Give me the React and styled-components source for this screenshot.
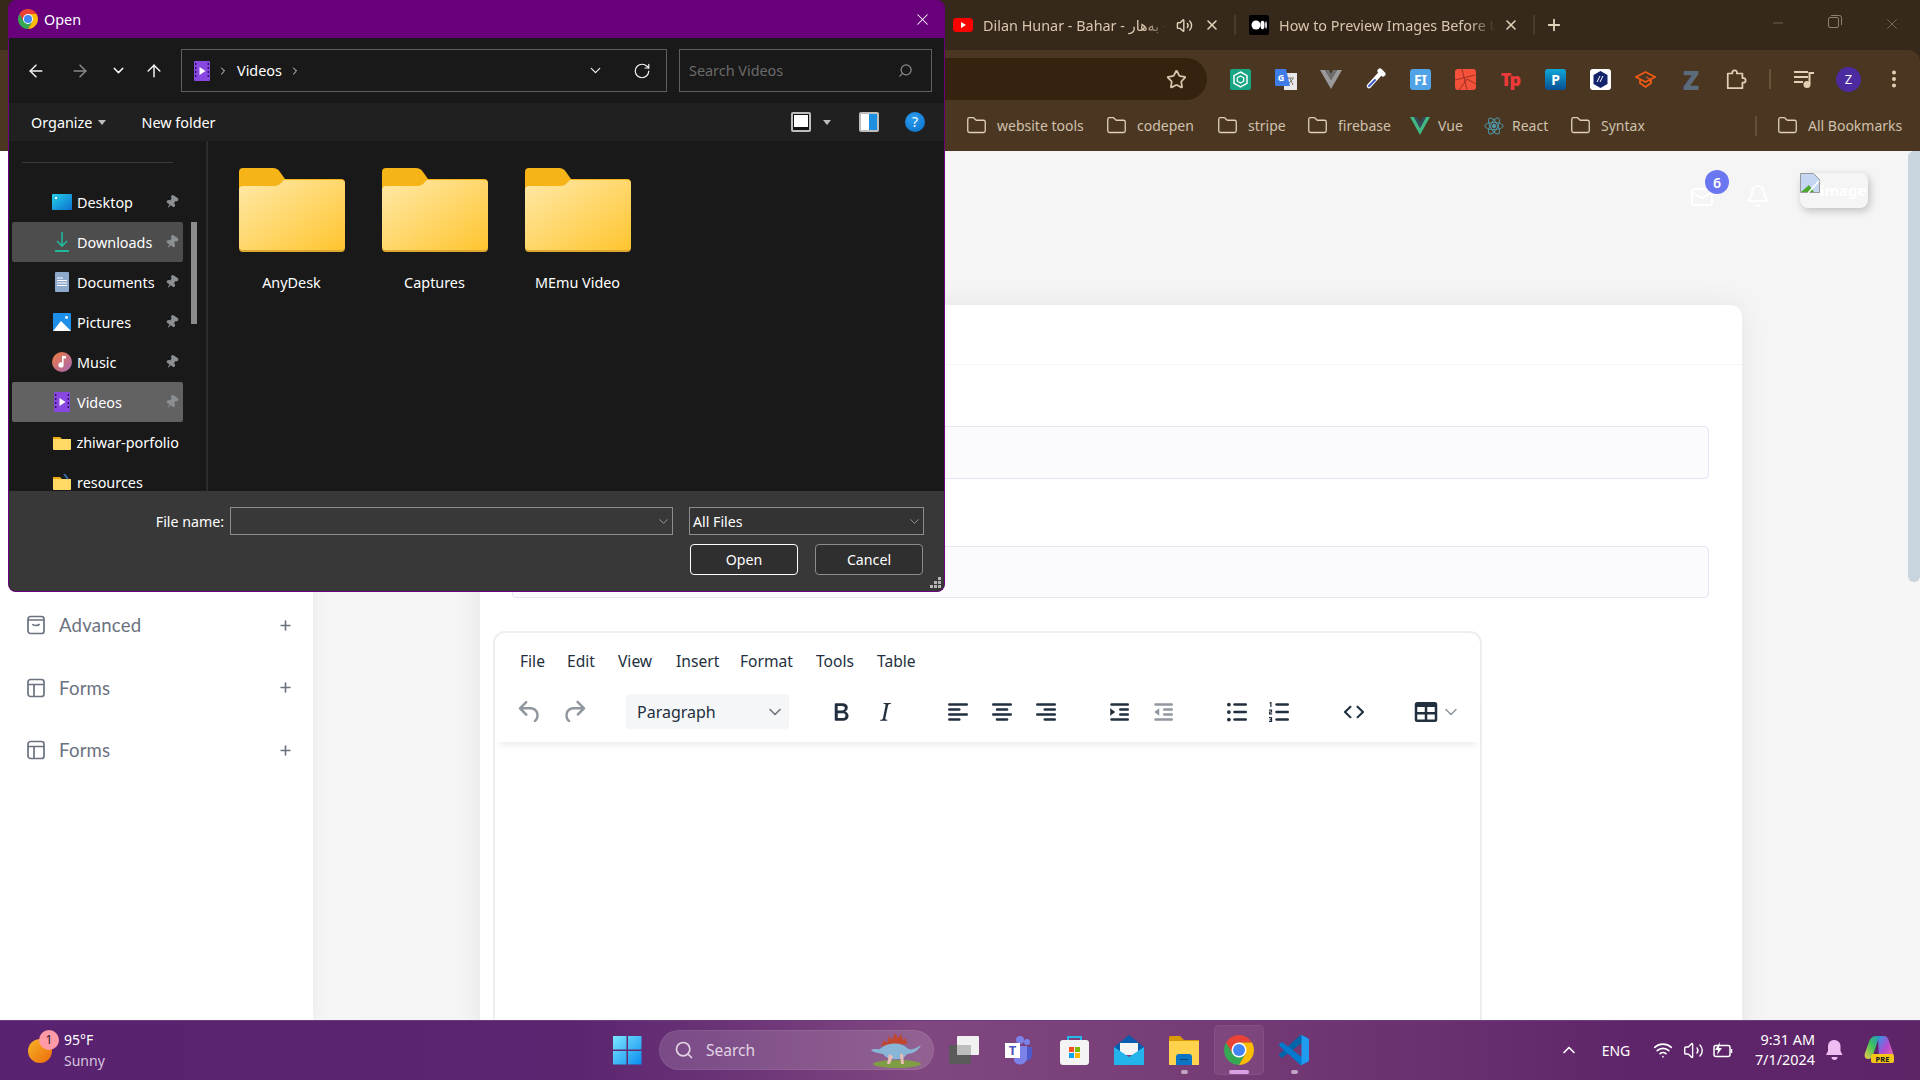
import styled, { createGlobalStyle } from 'styled-components';
import {
  ArrowLeft,
  ArrowRight,
  ArrowUp,
  Bell,
  ChevronDown,
  ChevronRight,
  ChevronUp,
  EllipsisVertical,
  Folder,
  Mail,
  Minus,
  Pin,
  Plus,
  RotateCw,
  Search,
  Star,
  Volume2,
  Wifi,
  X,
} from 'lucide-react';

const ui = `"Noto Sans", "Open Sans", "DejaVu Sans", sans-serif`;

const GlobalStyle = createGlobalStyle`
  html, body { margin: 0; padding: 0; width: 1920px; height: 1080px; overflow: hidden; }
  * { box-sizing: border-box; }
  body { font-family: ${ui}; background: #f5f5f5; }
  svg { display: block; flex: none; }
`;

const Screen = styled.div`
  position: relative;
  width: 1920px;
  height: 1080px;
  display: grid;
  grid-template-rows: 151px 869px 60px;
  overflow: hidden;
`;

/* ---------- browser chrome ---------- */

const BrowserFrame = styled.header`
  background: #36281b;
  display: flex;
  flex-direction: column;
`;

const TabStrip = styled.div`
  height: 50px;
  display: flex;
  align-items: center;
  padding-left: 953px;
`;

const Tab = styled.div`
  width: ${(p) => p.$width}px;
  padding-right: 7px;
  display: flex;
  align-items: center;
  color: #d9c6ad;
  font-size: 14.4px;
`;

const TabTitle = styled.div`
  flex: 1;
  min-width: 0;
  margin-left: 10px;
  white-space: nowrap;
  overflow: hidden;
  -webkit-mask-image: linear-gradient(90deg, #000 88%, transparent);
  mask-image: linear-gradient(90deg, #000 88%, transparent);
`;

const TabAction = styled.span`
  width: 30px;
  padding-left: ${(p) => p.$shift || 0}px;
  display: flex;
  justify-content: center;
  color: #e3d3bb;
`;

const TabDivider = styled.span`
  width: 2px;
  height: 20px;
  margin-right: ${(p) => p.$right}px;
  background: #4c3b2b;
`;

const WindowControls = styled.div`
  margin-left: auto;
  display: flex;
  margin-top: -2px;
`;

const WindowButton = styled.span`
  width: 57px;
  display: flex;
  justify-content: center;
  color: #8d8070;
`;

const ToolbarRow = styled.div`
  height: 58px;
  background: #4b3622;
  border-top-right-radius: 12px;
  display: flex;
  padding: 8px 0 0 945px;
`;

const Omnibox = styled.div`
  width: 262px;
  height: 42px;
  background: #36230f;
  border-radius: 0 21px 21px 0;
  display: flex;
  align-items: center;
  justify-content: flex-end;
  padding-right: 20px;
  color: #d9c6ad;
  margin-right: 11px;
`;

const ExtSlot = styled.span`
  width: 45px;
  height: 42px;
  display: flex;
  align-items: center;
  justify-content: center;
  color: #e3d0b4;
`;

const ToolSeparator = styled.span`
  width: 2px;
  height: 20px;
  margin: 11px 10px 0 11px;
  background: #6a533a;
`;

const ExtBox = styled.span`
  width: 21px;
  height: 21px;
  border-radius: 3px;
  display: flex;
  align-items: center;
  justify-content: center;
  background: ${(p) => p.$bg};
  color: #fff;
  font-size: 14px;
  font-weight: 700;
`;

const LetterMark = styled.span`
  color: ${(p) => p.$color};
  font-size: ${(p) => p.$size}px;
  font-weight: 900;
  line-height: 1;
  letter-spacing: -1px;
`;

const Avatar = styled.span`
  width: 25px;
  height: 25px;
  border-radius: 50%;
  background: #4c2aa0;
  color: #fff;
  font-size: 13px;
  display: flex;
  align-items: center;
  justify-content: center;
`;

const BookmarkBar = styled.nav`
  height: 43px;
  padding: 0 0 8px 966px;
  background: #4b3622;
  display: flex;
  align-items: center;
  color: #cfc1ac;
  font-size: 14px;
`;

const Bookmark = styled.span`
  width: ${(p) => p.$width}px;
  display: flex;
  align-items: center;
  gap: ${(p) => p.$gap || 10}px;
  white-space: nowrap;
  svg { color: #e0d0ba; }
`;

const BookmarkSeparator = styled.span`
  width: 2px;
  height: 20px;
  margin: 0 20px 0 auto;
  background: #64503a;
`;

/* ---------- web page under the dialog ---------- */

const PageBody = styled.div`
  display: flex;
  background: #f5f5f5;
  overflow: hidden;
`;

const Sidebar = styled.aside`
  width: 313px;
  flex: none;
  background: #fff;
  padding-top: 443px;
  box-shadow: 0 0 14px rgba(0, 0, 0, 0.06);
  z-index: 1;
`;

const SideRow = styled.div`
  height: 62.5px;
  display: flex;
  align-items: center;
  padding: 0 20px 0 27px;
  color: #6b7280;
  font-family: Lato, ${ui};
  font-size: 18.6px;
  letter-spacing: 0.2px;
  gap: 14px;
  svg:last-child { margin-left: auto; }
`;

const Main = styled.main`
  flex: 1;
  min-width: 0;
`;

const PageTop = styled.div`
  height: 154px;
  display: flex;
  justify-content: flex-end;
  padding: 21px 40px 0 0;
`;

const MailButton = styled.span`
  position: relative;
  width: 24px;
  height: 24px;
  margin-top: 13px;
  color: #fff;
`;

const CountBadge = styled.span`
  position: absolute;
  top: -15px;
  left: 15px;
  width: 24px;
  height: 24px;
  border-radius: 50%;
  background: #6a77f0;
  color: #fff;
  font-size: 14px;
  font-weight: 600;
  display: flex;
  align-items: center;
  justify-content: center;
`;

const BellButton = styled.span`
  margin: 12px 30px 0 32px;
  color: #fff;
`;

const BrokenAvatar = styled.span`
  width: 68px;
  height: 35px;
  margin-top: 1px;
  border-radius: 8px;
  background: #f5f5f5;
  box-shadow: 2px 3px 8px rgba(0, 0, 0, 0.22);
  display: flex;
  color: #fff;
  font-size: 15px;
  font-weight: 700;
  line-height: 34px;
`;

const Card = styled.section`
  width: 1262px;
  height: 760px;
  margin-left: 167px;
  background: #fff;
  border-radius: 12px 12px 0 0;
  box-shadow: 0 0 28px rgba(0, 0, 0, 0.07);
`;

const CardHeader = styled.div`
  height: 60px;
  border-bottom: 1px solid #f6f6f6;
`;

const FieldBox = styled.div`
  width: 1197px;
  height: ${(p) => p.$height}px;
  margin: ${(p) => p.$top}px 0 0 32px;
  background: #fbfbfe;
  border: 1px solid #e4e6f8;
  border-radius: 4px;
`;

const Editor = styled.div`
  width: 989px;
  height: 420px;
  margin: 33px 0 0 13px;
  border: 2px solid #eeeeee;
  border-radius: 12px 12px 0 0;
  color: #222f3e;
`;

const MenuBar = styled.div`
  height: 56px;
  display: flex;
  align-items: center;
  padding-left: 25px;
  font-size: 15.6px;
`;

const MenuItem = styled.span`
  width: ${(p) => p.$width}px;
`;

const EditorTools = styled.div`
  height: 53px;
  padding: 0 0 8px 13px;
  display: flex;
  align-items: center;
  box-shadow: 0 7px 8px -5px rgba(34, 47, 62, 0.12);
`;

const ToolGroup = styled.div`
  display: flex;
  margin-left: ${(p) => p.$left || 0}px;
`;

const ToolSlot = styled.span`
  width: ${(p) => p.$width || 44}px;
  height: 36px;
  display: flex;
  align-items: center;
  justify-content: center;
  color: ${(p) => (p.$off ? '#91979f' : '#222f3e')};
`;

const BlockSelect = styled.div`
  width: 163px;
  height: 35px;
  margin-left: 30px;
  padding: 0 4px 0 11px;
  border-radius: 4px;
  background: #f5f6f7;
  display: flex;
  align-items: center;
  justify-content: space-between;
  font-size: 16px;
  svg { color: #6d7680; }
`;

const PageScrollThumb = styled.div`
  width: 12px;
  height: 431px;
  flex: none;
  background: #c8d5df;
  border-radius: 6px 0 6px 6px;
`;

/* ---------- file dialog ---------- */

const Dialog = styled.div`
  position: absolute;
  top: 0;
  left: 8px;
  width: 937px;
  height: 592px;
  border: 1px solid #68007c;
  border-top: 0;
  border-radius: 8px;
  background: #191919;
  color: #fff;
  display: flex;
  flex-direction: column;
  overflow: hidden;
  font-size: 14.4px;
  z-index: 2;
`;

const TitleBar = styled.div`
  height: 38px;
  flex: none;
  background: #68007c;
  display: flex;
  align-items: center;
  gap: 6px;
  padding: 0 12px 0 9px;
  svg:last-child { margin-left: auto; }
`;

const NavRow = styled.div`
  height: 65px;
  flex: none;
  display: flex;
  align-items: center;
  padding-left: 5px;
`;

const NavButton = styled.span`
  width: ${(p) => p.$width}px;
  margin-right: ${(p) => p.$right || 0}px;
  display: flex;
  justify-content: center;
  color: ${(p) => (p.$off ? '#8a8a8a' : '#f2f2f2')};
`;

const PathBox = styled.div`
  width: ${(p) => p.$width}px;
  height: 43px;
  margin-left: ${(p) => p.$left}px;
  border: 1px solid #5f5f5f;
  display: flex;
  align-items: center;
  padding-left: ${(p) => p.$pad}px;
`;

const Crumb = styled.span`
  margin: 0 8px 0 7px;
  color: #e0e0e0;
`;

const PathSpacer = styled.span`
  flex: 1;
`;

const SearchHint = styled.span`
  flex: 1;
  color: #6b6b6b;
`;

const MirroredSearch = styled(Search)`
  transform: scaleX(-1);
`;

const CommandBar = styled.div`
  height: 38px;
  flex: none;
  background: #202020;
  display: flex;
  align-items: center;
  padding: 0 19px 0 22px;
  white-space: nowrap;
`;

const Caret = styled.span`
  width: 0;
  height: 0;
  margin: ${(p) => p.$margin};
  border: 4px solid transparent;
  border-top: 5px solid #bdbdbd;
  border-bottom: 0;
`;

const HelpDot = styled.span`
  width: 20px;
  height: 20px;
  margin-left: 26px;
  border-radius: 50%;
  background: radial-gradient(circle at 40% 30%, #2a9df0, #0a6fc9);
  font-size: 14px;
  line-height: 20px;
  text-align: center;
`;

const ViewIcon = styled.span`
  width: 20px;
  height: 20px;
  border-radius: 2px;
  background: #bdbdbd;
  padding: 2px;
  display: flex;
  margin-left: ${(p) => p.$left};
`;

const ViewPane = styled.span`
  flex: 1;
  background: ${(p) => p.$bg};
  border-bottom: ${(p) => (p.$line ? '2px solid #111' : 0)};
  box-shadow: ${(p) => (p.$line ? 'inset 0 0 0 1px #111' : 'none')};
`;

const DialogBody = styled.div`
  height: 350px;
  flex: none;
  display: flex;
  overflow: hidden;
`;

const TreePane = styled.div`
  width: 177px;
  flex: none;
  padding-top: 21px;
`;

const TreeRule = styled.div`
  height: 1px;
  margin: 0 13px 19px;
  background: #3a3a3a;
`;

const TreeRow = styled.div`
  height: 40px;
  width: 171px;
  margin-left: 3px;
  padding: 0 4px 0 39px;
  display: flex;
  align-items: center;
  gap: 4px;
  white-space: nowrap;
  background: ${(p) => p.$bg || 'transparent'};
  border-radius: 2px;
  svg.pin { margin-left: auto; color: #8b9094; fill: #8b9094; transform: rotate(35deg); }
`;

const TreeIcon = styled.span`
  width: 22px;
  display: flex;
  justify-content: center;
`;

const TreeScroll = styled.div`
  width: 6px;
  height: 102px;
  flex: none;
  margin: 81px 9px 0 5px;
  background: #8b8b8b;
`;

const PaneDivider = styled.div`
  width: 2px;
  flex: none;
  background: #2b2b2b;
`;

const FileGrid = styled.div`
  display: flex;
  padding: 27px 0 0 12px;
`;

const FileCell = styled.div`
  width: 143px;
  display: flex;
  flex-direction: column;
  align-items: center;
  gap: 21px;
  line-height: 20px;
`;

const DialogFooter = styled.div`
  position: relative;
  flex: 1;
  background: #383838;
  padding: 16px 21px 0 0;
  font-size: 14.2px;
`;

const FooterRow = styled.div`
  display: flex;
  align-items: center;
  justify-content: flex-end;
  gap: ${(p) => p.$gap}px;
  margin-top: ${(p) => p.$top || 0}px;
  margin-right: ${(p) => p.$right || 0}px;
`;

const ComboBox = styled.div`
  width: ${(p) => p.$width}px;
  height: 28px;
  margin-left: ${(p) => p.$left || 0}px;
  padding: 0 1px 0 3px;
  border: 1px solid #8c8c8c;
  background: ${(p) => p.$bg};
  display: flex;
  align-items: center;
  justify-content: space-between;
  color: #fff;
  svg { color: #b5b5b5; }
`;

const DialogButton = styled.button`
  width: 108px;
  height: 31px;
  border-radius: 4px;
  border: 1px solid ${(p) => (p.$primary ? '#ffffff' : '#8c8c8c')};
  background: #2f2f2f;
  color: #fff;
  font: inherit;
  padding: 0;
`;

const ResizeGrip = styled.svg`
  position: absolute;
  right: 2px;
  bottom: 2px;
`;

/* ---------- taskbar ---------- */

const Taskbar = styled.footer`
  background: linear-gradient(90deg, #582270 0%, #5b2570 30%, #804780 48%, #743a74 65%, #5f256a 85%, #5e2468 100%);
  box-shadow: inset 0 1px 0 #6a3d80;
  display: flex;
  align-items: center;
  color: #fff;
  z-index: 2;
`;

const Weather = styled.div`
  width: 601px;
  height: 100%;
  padding-left: 28px;
  display: flex;
  align-items: center;
  gap: 12px;
  flex: none;
`;

const WeatherIcon = styled.span`
  position: relative;
  width: 24px;
  height: 24px;
  margin-top: 2px;
  border-radius: 50%;
  background: linear-gradient(135deg, #f5b526, #ee6a0c);
`;

const WeatherBadge = styled.span`
  position: absolute;
  top: -9px;
  left: 11px;
  width: 20px;
  height: 20px;
  border-radius: 50%;
  background: #ff9aa6;
  color: #2a1525;
  font-size: 12px;
  line-height: 20px;
  text-align: center;
`;

const WeatherText = styled.div`
  font-size: 14px;
  line-height: 21px;
  margin-top: -1px;
  span { display: block; color: #d8c4de; }
`;

const TaskSlot = styled.span`
  position: relative;
  width: 50px;
  height: 50px;
  margin-right: 5px;
  border-radius: 5px;
  display: flex;
  align-items: center;
  justify-content: center;
  background: ${(p) => (p.$active ? 'rgba(255,255,255,0.07)' : 'transparent')};
  box-shadow: ${(p) => (p.$active ? 'inset 0 0 0 1px rgba(255,255,255,0.06)' : 'none')};
`;

const TaskDot = styled.span`
  position: absolute;
  bottom: 1px;
  width: ${(p) => (p.$active ? 20 : 7)}px;
  height: 4px;
  border-radius: 2px;
  background: ${(p) => (p.$active ? '#d9a0e4' : '#c3a4c5')};
`;

const SearchPill = styled.div`
  width: 275px;
  height: 40px;
  margin: 0 5px 0 8px;
  padding: 0 9px 0 15px;
  border-radius: 20px;
  background: rgba(255, 255, 255, 0.14);
  box-shadow: inset 0 0 0 1px rgba(255, 255, 255, 0.08);
  display: flex;
  align-items: center;
  gap: 12px;
  color: #e2d4e4;
  font-size: 15.5px;
  svg:last-child { margin-left: auto; }
`;

const Tray = styled.div`
  margin-left: auto;
  display: flex;
  align-items: center;
`;

const TrayItem = styled.span`
  display: flex;
  justify-content: center;
  width: ${(p) => p.$width}px;
  margin-right: ${(p) => p.$right || 0}px;
  font-size: 14px;
`;

const Clock = styled.div`
  width: 68px;
  margin: 0 9px 0 9px;
  text-align: right;
  font-size: 14.4px;
  line-height: 20px;
  white-space: nowrap;
`;

/* ---------- drawings ---------- */

function ChromeLogo({ size }) {
  return (
    <svg width={size} height={size} viewBox="4 4 40 40">
      <path fill="#ea4335" d="M6.68 14A20 20 0 0 1 41.32 14H24L15.34 29Z" />
      <path fill="#34a853" d="M6.68 14A20 20 0 0 0 24 44L32.66 29H15.34Z" />
      <path fill="#fbbc05" d="M41.32 14A20 20 0 0 1 24 44L32.66 29 24 14Z" />
      <circle cx="24" cy="24" r="10" fill="#fff" />
      <circle cx="24" cy="24" r="8" fill="#4285f4" />
    </svg>
  );
}

function VideosIcon({ w = 16, h = 20 }) {
  return (
    <svg width={w} height={h} viewBox="0 0 16 20">
      <rect width="16" height="20" rx="1" fill="#8847e0" />
      <path fill="#2d1060" d="M1 2h1.4v2H1zM1 6h1.4v2H1zM1 10h1.4v2H1zM1 14h1.4v2H1zM13.6 2H15v2h-1.4zM13.6 6H15v2h-1.4zM13.6 10H15v2h-1.4zM13.6 14H15v2h-1.4z" />
      <path fill="#fff" d="M5.5 6l6 4-6 4z" />
    </svg>
  );
}

function BigFolder() {
  return (
    <svg width="106" height="84" viewBox="0 0 106 84">
      <defs>
        <linearGradient id="fold" x1="0" y1="0" x2="1" y2="1">
          <stop offset="0" stopColor="#ffe9a8" />
          <stop offset="1" stopColor="#ffc52f" />
        </linearGradient>
      </defs>
      <path fill="#f6b416" d="M4 0h30c3 0 5 1 7 4l5 7h56a4 4 0 0 1 4 4v30H0V4a4 4 0 0 1 4-4Z" />
      <path fill="#dca830" d="M0 22a4 4 0 0 1 4-4h30c3 0 5 0 8-3l3-3h57a4 4 0 0 1 4 4v64a4 4 0 0 1-4 4H4a4 4 0 0 1-4-4Z" />
      <path fill="url(#fold)" d="M0 22a4 4 0 0 1 4-4h30c3 0 5 0 8-3l3-3h57a4 4 0 0 1 4 4v62a4 4 0 0 1-4 4H4a4 4 0 0 1-4-4Z" />
    </svg>
  );
}

function MiniFolder({ tool }) {
  return (
    <svg width="18" height="16" viewBox="0 0 18 16">
      <path fill="#f0ac10" d="M0 3h7l2 2h9v4H0z" />
      <path fill="#ffd964" d="M0 5h18v10a1 1 0 0 1-1 1H1a1 1 0 0 1-1-1z" />
      {tool && <path stroke="#3a6ea5" strokeWidth="2" d="M11 0l4 5" />}
    </svg>
  );
}

function TreeGlyph({ kind }) {
  if (kind === 'desktop') {
    return (
      <svg width="20" height="16" viewBox="0 0 20 16">
        <defs>
          <linearGradient id="dk" x1="0" y1="0" x2="1" y2="1">
            <stop offset="0" stopColor="#25d0e8" />
            <stop offset="1" stopColor="#0b6fd0" />
          </linearGradient>
        </defs>
        <rect width="20" height="16" rx="1" fill="url(#dk)" />
        <rect x="3" y="3" width="2" height="2" fill="#fff" />
      </svg>
    );
  }
  if (kind === 'downloads') {
    return (
      <svg width="16" height="20" viewBox="0 0 16 20" fill="none" stroke="#1fb89a" strokeWidth="1.6">
        <path d="M8 0v14M3 9l5 5 5-5" />
        <path d="M1 19h14" strokeWidth="2" />
      </svg>
    );
  }
  if (kind === 'documents') {
    return (
      <svg width="14" height="20" viewBox="0 0 14 20">
        <rect width="14" height="20" rx="1" fill="#8da9cc" />
        <path stroke="#fff" strokeWidth="1" d="M2 6h6M2 8.5h10M2 11h10M2 13.5h10" />
      </svg>
    );
  }
  if (kind === 'pictures') {
    return (
      <svg width="18" height="18" viewBox="0 0 18 18">
        <rect width="18" height="18" rx="1" fill="#1e8fe8" />
        <path fill="#fff" d="M0 18l8-10 10 10z" />
        <circle cx="13.5" cy="4.5" r="1.4" fill="#fff" />
      </svg>
    );
  }
  if (kind === 'music') {
    return (
      <svg width="20" height="20" viewBox="0 0 20 20">
        <defs>
          <linearGradient id="mu" x1="0" y1="0" x2="1" y2="1">
            <stop offset="0" stopColor="#ee7a3c" />
            <stop offset="1" stopColor="#a867b8" />
          </linearGradient>
        </defs>
        <circle cx="10" cy="10" r="10" fill="url(#mu)" />
        <path fill="#fff" d="M10 4h4v2.4h-2.4V13a2.6 2.6 0 1 1-1.6-2.4z" />
      </svg>
    );
  }
  if (kind === 'videos') return <VideosIcon />;
  return <MiniFolder tool={kind === 'tools'} />;
}

function EditorIcon({ d, rects }) {
  return (
    <svg width="30" height="30" viewBox="0 0 24 24" fill="currentColor">
      {d && <path d={d} />}
      {rects && rects.map((r, i) => <rect key={i} x={r[0]} y={r[1]} width={r[2]} height="2" rx="1" />)}
    </svg>
  );
}

const ALIGN_LEFT = [[4, 5, 16], [4, 9, 10], [4, 13, 16], [4, 17, 10]];
const ALIGN_CENTER = [[4, 5, 16], [7, 9, 10], [4, 13, 16], [7, 17, 10]];
const ALIGN_RIGHT = [[4, 5, 16], [10, 9, 10], [4, 13, 16], [10, 17, 10]];
const INDENT_LINES = [[5, 5, 15], [12, 9, 8], [12, 13, 8], [5, 17, 15]];

const EDITOR_PATHS = {
  undo: 'M6.4 8H12c3.7 0 6.2 2 6.8 5.1.6 2.7-.4 5.6-2.3 6.8a1 1 0 0 1-1-1.8c1.1-.6 1.8-2.7 1.4-4.6-.5-2.1-2.1-3.5-4.9-3.5H6.4l3.3 3.3a1 1 0 1 1-1.4 1.4l-5-5a1 1 0 0 1 0-1.4l5-5a1 1 0 0 1 1.4 1.4L6.4 8Z',
  redo: 'M17.6 10H12c-2.8 0-4.4 1.4-4.9 3.5-.4 2 .3 4 1.4 4.6a1 1 0 1 1-1 1.8c-2-1.2-2.9-4.1-2.3-6.8.6-3 3-5.1 6.8-5.1h5.6l-3.3-3.3a1 1 0 1 1 1.4-1.4l5 5a1 1 0 0 1 0 1.4l-5 5a1 1 0 0 1-1.4-1.4l3.3-3.3Z',
  bold: 'M7.8 19c-.3 0-.5 0-.6-.2l-.2-.5V5.7c0-.2 0-.4.2-.5l.6-.2h5c1.5 0 2.7.3 3.5 1 .7.6 1.1 1.4 1.1 2.5a3 3 0 0 1-.6 1.9c-.4.6-1 1-1.6 1.2.4.1.9.3 1.3.6s.8.7 1 1.2c.4.4.5 1 .5 1.6 0 1.3-.4 2.3-1.3 3-.8.7-2.1 1-3.8 1H7.8Zm5-8.3c.6 0 1.2-.1 1.6-.5.4-.3.6-.7.6-1.3 0-1.1-.8-1.7-2.3-1.7H9.3v3.5h3.4Zm.5 6c.7 0 1.3-.1 1.7-.4.4-.4.6-.9.6-1.5s-.2-1-.7-1.4c-.4-.3-1-.4-2-.4H9.4v3.8h4Z',
  italic: 'M16.7 4.7l-.1.9h-.3c-.6 0-1 0-1.4.3-.3.3-.4.6-.5 1.1l-2.1 9.8v.6c0 .5.4.8 1.4.8h.2l-.2.8H8l.2-.8h.2c1.1 0 1.8-.5 2-1.5l2-9.8.1-.5c0-.6-.4-.8-1.4-.8h-.3l.2-.9h5.8Z',
  code: 'M9.8 15.7c.3.3.3.8 0 1-.3.4-.9.4-1.2 0l-4.4-4.1a.8.8 0 0 1 0-1.2l4.4-4.2c.3-.3.9-.3 1.2 0 .3.3.3.8 0 1.1L6 12l3.8 3.7ZM14.2 15.7c-.3.3-.3.8 0 1 .4.4.9.4 1.2 0l4.4-4.1c.3-.3.3-.9 0-1.2l-4.4-4.2a.8.8 0 0 0-1.2 0c-.3.3-.3.8 0 1.1L18 12l-3.8 3.7Z',
  table: 'M19 4a2 2 0 0 1 2 2v12a2 2 0 0 1-2 2H5a2 2 0 0 1-2-2V6c0-1.1.9-2 2-2h14ZM5 14v4h6v-4H5Zm14 0h-6v4h6v-4Zm0-6h-6v4h6V8ZM5 12h6V8H5v4Z',
};

function ListIcon({ numbered }) {
  return (
    <svg width="30" height="30" viewBox="0 0 24 24" fill="currentColor">
      <rect x="9" y="5" width="11" height="2" rx="1" />
      <rect x="9" y="11" width="11" height="2" rx="1" />
      <rect x="9" y="17" width="11" height="2" rx="1" />
      {numbered ? (
        <path d="M5 4h1v4H5V5H4zM4 10h2.5v2.4H5V13h1.5v1H4v-2.4h1.5V11H4zM4 16h2.5v4H4v-1h1.5v-.5H4.6v-1h.9V17H4z" />
      ) : (
        <g>
          <circle cx="5.5" cy="6" r="1.5" />
          <circle cx="5.5" cy="12" r="1.5" />
          <circle cx="5.5" cy="18" r="1.5" />
        </g>
      )}
    </svg>
  );
}

function IndentArrow({ flip }) {
  return (
    <svg width="30" height="30" viewBox="0 0 24 24" fill="currentColor">
      {INDENT_LINES.map((r, i) => (
        <rect key={i} x={r[0]} y={r[1]} width={r[2]} height="2" rx="1" />
      ))}
      <path d={flip ? 'M9 9v6l-4-3z' : 'M5 9v6l4-3z'} />
    </svg>
  );
}

function SideIcon({ bag }) {
  return (
    <svg width="18" height="20" viewBox="0 0 18 20" fill="none" stroke="#6b7280" strokeWidth="1.7">
      <rect x="1" y="1.5" width="16" height="17" rx="2.5" />
      {bag ? <path d="M1 5h16M5.5 9c.8 2 5.8 2 7 0" /> : <path d="M1 6.5h16M7 6.5v12" />}
    </svg>
  );
}

function Dino() {
  return (
    <svg width="56" height="40" viewBox="0 0 56 40">
      <ellipse cx="28" cy="34" rx="24" ry="4" fill="#7e9d45" />
      <path fill="#c0472f" d="M12 16l3-6 3 3 2-7 3 4 3-7 3 5 3-4 2 6 3-2 1 6z" />
      <path fill="#89b6d6" d="M2 20c4-2 6 0 9-1 6-6 20-8 27-1 4 3 8 1 14-3-2 5-8 9-14 9-2 3-4 5-8 5-6 1-12 0-16-5-4-1-9-1-12-4z" />
      <path fill="#e7bcb4" d="M20 24l-2 10h3l3-8zM31 24l1 10h3l-1-10z" />
    </svg>
  );
}

function TaskIcon({ kind }) {
  if (kind === 'view') {
    return (
      <svg width="30" height="28" viewBox="0 0 30 28">
        <rect y="9" width="22" height="19" rx="1" fill="#5a5a5a" />
        <rect x="8" width="22" height="19" rx="1" fill="#f1f1f1" />
        <rect x="8" y="9" width="14" height="10" fill="#bdbdbd" />
      </svg>
    );
  }
  if (kind === 'teams') {
    return (
      <svg width="28" height="30" viewBox="0 0 28 30">
        <circle cx="22" cy="7" r="3" fill="#7b83eb" />
        <circle cx="15" cy="5" r="4" fill="#7b83eb" />
        <path fill="#5059c9" d="M20 12h7v9a6 6 0 0 1-7 5z" />
        <path fill="#7b83eb" d="M9 11h13v12a7 7 0 0 1-13 3z" />
        <rect y="8" width="15" height="15" fill="#fff" />
        <text x="7.5" y="20" textAnchor="middle" fontSize="13" fontWeight="700" fontFamily="Noto Sans" fill="#4b53bc">T</text>
      </svg>
    );
  }
  if (kind === 'store') {
    return (
      <svg width="29" height="30" viewBox="0 0 29 30">
        <path fill="none" stroke="#22b8e8" strokeWidth="2" d="M8 7V2h13v5" />
        <rect y="5" width="29" height="25" rx="3" fill="#f4f4f4" />
        <rect x="9" y="12" width="5" height="5" fill="#f25022" />
        <rect x="15" y="12" width="5" height="5" fill="#7fba00" />
        <rect x="9" y="18" width="5" height="5" fill="#00a4ef" />
        <rect x="15" y="18" width="5" height="5" fill="#ffb900" />
      </svg>
    );
  }
  if (kind === 'mail') {
    return (
      <svg width="30" height="30" viewBox="0 0 30 30">
        <path fill="#0a5cae" d="M0 12L15 0l15 12v6H0z" />
        <path fill="#f5f5f5" d="M6 8h18v12H6z" />
        <path fill="#23b4ec" d="M0 12l15 10 15-10v18H0z" />
      </svg>
    );
  }
  if (kind === 'explorer') {
    return (
      <svg width="30" height="29" viewBox="0 0 30 29">
        <path fill="#d99a05" d="M1 0h10l4 4h15v8H0V1z" />
        <path fill="#ffd24d" d="M0 5h30v24H0z" />
        <path fill="#0b74c4" d="M7 21a3 3 0 0 1 3-3h10a3 3 0 0 1 3 3v8H7z" />
        <path fill="#063e70" d="M11 23h8v1h-8z" />
      </svg>
    );
  }
  if (kind === 'code') {
    return (
      <svg width="30" height="30" viewBox="0 0 100 100">
        <path fill="#0065a9" d="M96.5 10.8 75.900.9a6.200 6.200 0 0 0-7.100 1.200L1.400 63.600a4.200 4.200 0 0 0 0 6.100l5.500 5a4.200 4.200 0 0 0 5.300.2l81.200-61.600a4.100 4.100 0 0 1 6.600 3.300v-.2c0-2.400-1.400-4.600-3.500-5.600Z" />
        <path fill="#007acc" d="M96.500 89.200 75.900 99.100a6.200 6.200 0 0 1-7.100-1.200L1.400 36.400a4.200 4.200 0 0 1 0-6.100l5.500-5a4.200 4.200 0 0 1 5.300-.2l81.200 61.600a4.100 4.100 0 0 0 6.600-3.300v.2c0 2.400-1.400 4.600-3.500 5.600Z" />
        <path fill="#1f9cf0" d="M75.900 99.100a6.200 6.200 0 0 1-7.100-1.200c2.300 2.300 6.200.7 6.200-2.600V4.700c0-3.300-3.900-4.900-6.200-2.600a6.200 6.200 0 0 1 7.100-1.200l20.600 9.900c2.200 1 3.500 3.200 3.500 5.600v67.200c0 2.400-1.400 4.600-3.500 5.600Z" />
      </svg>
    );
  }
  return <ChromeLogo size={30} />;
}

const tree = [
  { name: 'Desktop', kind: 'desktop', pin: true },
  { name: 'Downloads', kind: 'downloads', pin: true, bg: '#4d4d4d' },
  { name: 'Documents', kind: 'documents', pin: true },
  { name: 'Pictures', kind: 'pictures', pin: true },
  { name: 'Music', kind: 'music', pin: true },
  { name: 'Videos', kind: 'videos', pin: true, bg: '#626262' },
  { name: 'zhiwar-porfolio', kind: 'folder' },
  { name: 'resources', kind: 'tools' },
];

const bookmarks = [
  { name: 'website tools', width: 140 },
  { name: 'codepen', width: 111 },
  { name: 'stripe', width: 90 },
  { name: 'firebase', width: 103 },
];

const menus = [
  ['File', 47],
  ['Edit', 51],
  ['View', 58],
  ['Insert', 64],
  ['Format', 76],
  ['Tools', 61],
  ['Table', 50],
];

function Extensions() {
  return (
    <>
      <ExtSlot>
        <svg width="21" height="21" viewBox="0 0 21 21">
          <rect width="21" height="21" rx="2" fill="#17a583" />
          <path fill="none" stroke="#fff" strokeWidth="1.5" d="M10.500 3l6.500 3.700v7.600L10.500 18 4 14.300V6.700z" />
          <path fill="none" stroke="#fff" strokeWidth="1.300" d="M10.500 7l3.200 1.800v3.400L10.500 14l-3.200-1.800V8.800z" />
        </svg>
      </ExtSlot>
      <ExtSlot>
        <svg width="22" height="21" viewBox="0 0 22 21">
          <rect x="9" y="4" width="13" height="17" fill="#e8e8e8" />
          <path d="M12 9h7M14 14l4-4M15 9l3 7" stroke="#777" fill="none" />
          <path fill="#3f7ce8" d="M1 0h10l4 17H1a1 1 0 0 1-1-1V1a1 1 0 0 1 1-1z" />
          <text x="6" y="12" fontSize="9" fontWeight="700" fill="#fff" textAnchor="middle" fontFamily="Noto Sans">G</text>
        </svg>
      </ExtSlot>
      <ExtSlot>
        <svg width="22" height="19" viewBox="0 0 22 19">
          <path fill="#9a9a9a" d="M0 0h5l6 10 6-10h5L11 19z" />
          <path fill="#6f6f6f" d="M5 0h4l2 4 2-4h4l-6 10z" />
        </svg>
      </ExtSlot>
      <ExtSlot>
        <svg width="22" height="22" viewBox="0 0 22 22" fill="none">
          <path stroke="#fff" strokeWidth="5" strokeLinecap="round" d="M15 3l3 3" />
          <path stroke="#fff" strokeWidth="4.500" strokeLinecap="round" d="M14 7L4 18" />
          <path stroke="#3957c4" strokeWidth="2" strokeLinecap="round" d="M10 12l-6 6" />
        </svg>
      </ExtSlot>
      <ExtSlot>
        <ExtBox $bg="#4fa3e6">FI</ExtBox>
      </ExtSlot>
      <ExtSlot>
        <svg width="21" height="21" viewBox="0 0 21 21">
          <rect width="21" height="21" rx="3" fill="#f4513a" />
          <path stroke="#8a2a1c" strokeWidth="0.800" fill="none" d="M0 11l20-5M7 0l5 21M4 21l8-11M12 10l9 5" />
        </svg>
      </ExtSlot>
      <ExtSlot>
        <LetterMark $color="#ee3a3a" $size={18}>Tp</LetterMark>
      </ExtSlot>
      <ExtSlot>
        <ExtBox $bg="linear-gradient(180deg,#10a8d8,#084f94)">P</ExtBox>
      </ExtSlot>
      <ExtSlot>
        <ExtBox $bg="#fff">
          <svg width="17" height="17" viewBox="0 0 17 17">
            <path fill="#13246b" d="M8.500 0l7 4v9l-7 4-7-4V4z" />
            <path stroke="#fff" strokeWidth="1" d="M5 11l3-6M8 11l3-6" />
          </svg>
        </ExtBox>
      </ExtSlot>
      <ExtSlot>
        <svg width="21" height="17" viewBox="0 0 21 17" fill="none" stroke="#ee5a14" strokeWidth="1.800">
          <path d="M10.500 1L20 6l-9.500 5L1 6z" />
          <path d="M5 9v3l5.500 4 5.500-4V9" />
          <path d="M11 6l4 2v3" strokeWidth="1.200" />
        </svg>
      </ExtSlot>
      <ExtSlot>
        <LetterMark $color="#5c6b7c" $size={27}>Z</LetterMark>
      </ExtSlot>
      <ExtSlot>
        <svg width="22" height="22" viewBox="0 0 24 24" fill="none" stroke="currentColor" strokeWidth="1.900" strokeLinejoin="round">
          <path d="M3 6h5V5a2.500 2.500 0 0 1 5 0v1h6v5h1a2.500 2.500 0 0 1 0 5h-1v6H3z" />
        </svg>
      </ExtSlot>
    </>
  );
}

export default function App() {
  return (
    <Screen>
      <GlobalStyle />

      <BrowserFrame>
        <TabStrip>
          <Tab $width={281}>
            <svg width="20" height="14" viewBox="0 0 20 14">
              <rect width="20" height="14" rx="3.500" fill="#f00" />
              <path fill="#fff" d="M8 4l5 3-5 3z" />
            </svg>
            <TabTitle>Dilan Hunar - Bahar - بەهار -</TabTitle>
            <TabAction $shift={4}>
              <Volume2 size={17} />
            </TabAction>
            <TabAction>
              <X size={16} strokeWidth={2.4} />
            </TabAction>
          </Tab>
          <TabDivider $right={13} />
          <Tab $width={284}>
            <svg width="20" height="20" viewBox="0 0 20 20">
              <rect width="20" height="20" rx="2" fill="#000" />
              <ellipse cx="7" cy="10" rx="4.500" ry="4.500" fill="#fff" />
              <ellipse cx="13.500" cy="10" rx="2" ry="4.200" fill="#fff" />
              <ellipse cx="17" cy="10" rx="0.800" ry="3.800" fill="#fff" />
            </svg>
            <TabTitle>How to Preview Images Before Uploading</TabTitle>
            <TabAction>
              <X size={16} strokeWidth={2.4} />
            </TabAction>
          </Tab>
          <TabDivider $right={4} />
          <TabAction>
            <Plus size={18} strokeWidth={2.4} />
          </TabAction>
          <WindowControls>
            <WindowButton>
              <Minus size={16} strokeWidth={1} />
            </WindowButton>
            <WindowButton>
              <svg width="14" height="14" viewBox="0 0 14 14" fill="none" stroke="currentColor">
                <rect x="0.500" y="2.500" width="10" height="10" rx="1.500" />
                <path d="M3 .5h8.500a2 2 0 0 1 2 2V10" />
              </svg>
            </WindowButton>
            <WindowButton>
              <X size={18} strokeWidth={1} />
            </WindowButton>
          </WindowControls>
        </TabStrip>

        <ToolbarRow>
          <Omnibox>
            <Star size={21} strokeWidth={2} />
          </Omnibox>
          <Extensions />
          <ToolSeparator />
          <ExtSlot>
            <svg width="20" height="18" viewBox="0 0 20 18" fill="#e3d0b4">
              <rect y="1" width="14" height="2" />
              <rect y="6" width="14" height="2" />
              <rect y="11" width="9" height="2" />
              <circle cx="13" cy="14.500" r="3.500" />
              <path d="M14.500 2H20v2h-3.500v10h-2z" />
            </svg>
          </ExtSlot>
          <ExtSlot>
            <Avatar>Z</Avatar>
          </ExtSlot>
          <ExtSlot>
            <EllipsisVertical size={22} strokeWidth={2.4} />
          </ExtSlot>
        </ToolbarRow>

        <BookmarkBar>
          {bookmarks.map((b) => (
            <Bookmark key={b.name} $width={b.width}>
              <Folder size={21} strokeWidth={1.5} />
              {b.name}
            </Bookmark>
          ))}
          <Bookmark $width={74} $gap={8}>
            <svg width="20" height="18" viewBox="0 0 20 18">
              <path fill="#41b883" d="M0 0h4l6 11 6-11h4L10 18z" />
              <path fill="#35495e" d="M4 0h3l3 5 3-5h3l-6 11z" />
            </svg>
            Vue
          </Bookmark>
          <Bookmark $width={86} $gap={8}>
            <svg width="20" height="20" viewBox="-11 -11 22 22" fill="none" stroke="#4f97a8" strokeWidth="1.100">
              <circle r="2" fill="#4f97a8" />
              <ellipse rx="10" ry="4" />
              <ellipse rx="10" ry="4" transform="rotate(60)" />
              <ellipse rx="10" ry="4" transform="rotate(120)" />
            </svg>
            React
          </Bookmark>
          <Bookmark>
            <Folder size={21} strokeWidth={1.5} />
            Syntax
          </Bookmark>
          <BookmarkSeparator />
          <Bookmark $width={143}>
            <Folder size={21} strokeWidth={1.5} />
            All Bookmarks
          </Bookmark>
        </BookmarkBar>
      </BrowserFrame>

      <PageBody>
        <Sidebar>
          <SideRow>
            <SideIcon bag />
            Advanced
            <Plus size={15} strokeWidth={2.6} />
          </SideRow>
          <SideRow>
            <SideIcon />
            Forms
            <Plus size={15} strokeWidth={2.6} />
          </SideRow>
          <SideRow>
            <SideIcon />
            Forms
            <Plus size={15} strokeWidth={2.6} />
          </SideRow>
        </Sidebar>

        <Main>
          <PageTop>
            <MailButton>
              <Mail size={24} strokeWidth={2} />
              <CountBadge>6</CountBadge>
            </MailButton>
            <BellButton>
              <Bell size={24} strokeWidth={2} />
            </BellButton>
            <BrokenAvatar>
              <svg width="20" height="20" viewBox="0 0 20 20">
                <path fill="#c5d6f2" stroke="#9a9a9a" d="M.5.5h13l6 6v13H.5z" />
                <path fill="#4ea72e" d="M1 19l8-7 5 7z" />
                <path stroke="#fff" strokeWidth="1.500" d="M19 8L8 20" />
              </svg>
              image
            </BrokenAvatar>
          </PageTop>
          <Card>
            <CardHeader />
            <FieldBox $top={61} $height={53} />
            <FieldBox $top={67} $height={52} />
            <Editor>
              <MenuBar>
                {menus.map(([label, width]) => (
                  <MenuItem key={label} $width={width}>
                    {label}
                  </MenuItem>
                ))}
              </MenuBar>
              <EditorTools>
                <ToolGroup>
                  <ToolSlot $off>
                    <EditorIcon d={EDITOR_PATHS.undo} />
                  </ToolSlot>
                  <ToolSlot $off>
                    <EditorIcon d={EDITOR_PATHS.redo} />
                  </ToolSlot>
                </ToolGroup>
                <BlockSelect>
                  Paragraph
                  <ChevronDown size={20} strokeWidth={2} />
                </BlockSelect>
                <ToolGroup $left={30}>
                  <ToolSlot>
                    <EditorIcon d={EDITOR_PATHS.bold} />
                  </ToolSlot>
                  <ToolSlot>
                    <EditorIcon d={EDITOR_PATHS.italic} />
                  </ToolSlot>
                </ToolGroup>
                <ToolGroup $left={29}>
                  <ToolSlot>
                    <EditorIcon rects={ALIGN_LEFT} />
                  </ToolSlot>
                  <ToolSlot>
                    <EditorIcon rects={ALIGN_CENTER} />
                  </ToolSlot>
                  <ToolSlot>
                    <EditorIcon rects={ALIGN_RIGHT} />
                  </ToolSlot>
                </ToolGroup>
                <ToolGroup $left={29}>
                  <ToolSlot>
                    <IndentArrow />
                  </ToolSlot>
                  <ToolSlot $off>
                    <IndentArrow flip />
                  </ToolSlot>
                </ToolGroup>
                <ToolGroup $left={31}>
                  <ToolSlot $width={42}>
                    <ListIcon />
                  </ToolSlot>
                  <ToolSlot $width={42}>
                    <ListIcon numbered />
                  </ToolSlot>
                </ToolGroup>
                <ToolGroup $left={32}>
                  <ToolSlot>
                    <EditorIcon d={EDITOR_PATHS.code} />
                  </ToolSlot>
                </ToolGroup>
                <ToolGroup $left={35}>
                  <ToolSlot $width={30}>
                    <EditorIcon d={EDITOR_PATHS.table} />
                  </ToolSlot>
                  <ToolSlot $width={20} $off>
                    <ChevronDown size={20} strokeWidth={1.8} />
                  </ToolSlot>
                </ToolGroup>
              </EditorTools>
            </Editor>
          </Card>
        </Main>
        <PageScrollThumb />
      </PageBody>

      <Taskbar>
        <Weather>
          <WeatherIcon>
            <WeatherBadge>1</WeatherBadge>
          </WeatherIcon>
          <WeatherText>
            95°F
            <span>Sunny</span>
          </WeatherText>
        </Weather>
        <svg width="50" height="29" viewBox="-12 0 50 29">
          <defs>
            <linearGradient id="win" x1="0" y1="0" x2="1" y2="1">
              <stop offset="0" stopColor="#7ce8ff" />
              <stop offset="1" stopColor="#0a8cf0" />
            </linearGradient>
          </defs>
          <path fill="url(#win)" d="M0 0h13.500v13.500H0zM15 0h13.500v13.500H15zM0 15h13.500v13.500H0zM15 15h13.500v13.500H15z" />
        </svg>
        <SearchPill>
          <Search size={20} strokeWidth={2} />
          Search
          <Dino />
        </SearchPill>
        <TaskSlot>
          <TaskIcon kind="view" />
        </TaskSlot>
        <TaskSlot>
          <TaskIcon kind="teams" />
        </TaskSlot>
        <TaskSlot>
          <TaskIcon kind="store" />
        </TaskSlot>
        <TaskSlot>
          <TaskIcon kind="mail" />
        </TaskSlot>
        <TaskSlot>
          <TaskIcon kind="explorer" />
          <TaskDot />
        </TaskSlot>
        <TaskSlot $active>
          <TaskIcon kind="chrome" />
          <TaskDot $active />
        </TaskSlot>
        <TaskSlot>
          <TaskIcon kind="code" />
          <TaskDot />
        </TaskSlot>
        <Tray>
          <TrayItem $width={24} $right={16}>
            <ChevronUp size={20} strokeWidth={2} />
          </TrayItem>
          <TrayItem $width={38} $right={13}>ENG</TrayItem>
          <TrayItem $width={30}>
            <Wifi size={20} strokeWidth={2} />
          </TrayItem>
          <TrayItem $width={30}>
            <Volume2 size={21} strokeWidth={1.6} />
          </TrayItem>
          <TrayItem $width={30}>
            <svg width="20" height="16" viewBox="0 0 20 16" fill="none" stroke="#fff" strokeWidth="1.500">
              <rect x="1" y="3.500" width="16" height="11" rx="2" />
              <path d="M18.500 7v4" />
              <path fill="#fff" stroke="none" d="M7 0L2 8h3l-1 5 5-7H6z" />
            </svg>
          </TrayItem>
          <Clock>
            9:31 AM
            <br />
            7/1/2024
          </Clock>
          <TrayItem $width={20} $right={19}>
            <svg width="17" height="20" viewBox="0 0 17 20" fill="#efbdf2">
              <path d="M8.500 0a6 6 0 0 1 6 6v5l2 4H0l2-4V6a6 6 0 0 1 6.500-6zM5.500 17h6a3 3 0 0 1-6 0z" />
            </svg>
          </TrayItem>
          <TrayItem $width={32} $right={25}>
            <svg width="30" height="30" viewBox="0 0 30 30">
              <defs>
                <linearGradient id="cop1" x1="0" y1="1" x2="1" y2="0">
                  <stop offset="0" stopColor="#f7c948" />
                  <stop offset="0.500" stopColor="#3fc25a" />
                  <stop offset="1" stopColor="#1a8fe0" />
                </linearGradient>
                <linearGradient id="cop2" x1="0" y1="0" x2="1" y2="1">
                  <stop offset="0" stopColor="#2a9be8" />
                  <stop offset="0.500" stopColor="#b04ad0" />
                  <stop offset="1" stopColor="#f06fa0" />
                </linearGradient>
              </defs>
              <path fill="url(#cop2)" d="M14 1h6c3 0 4 2 5 5l4 12c1 3-1 6-4 6H15z" />
              <path fill="url(#cop1)" d="M12 1h6c-3 1-4 4-5 7l-4 12c-1 2-2 4-5 4-3 0-4-3-3-6l4-11c1-3 3-6 7-6z" />
              <rect x="7" y="19" width="23" height="9" rx="2" fill="#f5c518" />
              <text x="18.500" y="26.500" textAnchor="middle" fontSize="7.500" fontWeight="800" fontFamily="Noto Sans" fill="#222">PRE</text>
            </svg>
          </TrayItem>
        </Tray>
      </Taskbar>

      <Dialog>
        <TitleBar>
          <ChromeLogo size={20} />
          Open
          <X size={19} strokeWidth={1.3} />
        </TitleBar>
        <NavRow>
          <NavButton $width={44}>
            <ArrowLeft size={20} strokeWidth={1.8} />
          </NavButton>
          <NavButton $width={44} $off>
            <ArrowRight size={20} strokeWidth={1.8} />
          </NavButton>
          <NavButton $width={32}>
            <ChevronDown size={17} strokeWidth={2} />
          </NavButton>
          <NavButton $width={40}>
            <ArrowUp size={20} strokeWidth={1.8} />
          </NavButton>
          <PathBox $width={486} $left={7} $pad={12}>
            <VideosIcon />
            <Crumb>
              <ChevronRight size={12} strokeWidth={2} />
            </Crumb>
            Videos
            <Crumb>
              <ChevronRight size={12} strokeWidth={2} />
            </Crumb>
            <PathSpacer />
            <NavButton $width={30} $right={8}>
              <ChevronDown size={17} strokeWidth={1.7} />
            </NavButton>
            <NavButton $width={48}>
              <RotateCw size={18} strokeWidth={1.6} />
            </NavButton>
          </PathBox>
          <PathBox $width={253} $left={12} $pad={9}>
            <SearchHint>Search Videos</SearchHint>
            <NavButton $width={34} $right={9} $off>
              <MirroredSearch size={15} strokeWidth={2} />
            </NavButton>
          </PathBox>
        </NavRow>
        <CommandBar>
          Organize
          <Caret $margin="0 35px 0 6px" />
          New folder
          <ViewIcon $left="auto">
            <ViewPane $bg="#fff" $line />
          </ViewIcon>
          <Caret $margin="0 0 0 12px" />
          <ViewIcon $left="28px">
            <ViewPane $bg="#fff" />
            <ViewPane $bg="#1c8fe0" />
          </ViewIcon>
          <HelpDot>?</HelpDot>
        </CommandBar>
        <DialogBody>
          <TreePane>
            <TreeRule />
            {tree.map((item) => (
              <TreeRow key={item.name} $bg={item.bg}>
                <TreeIcon>
                  <TreeGlyph kind={item.kind} />
                </TreeIcon>
                {item.name}
                {item.pin && <Pin className="pin" size={14} />}
              </TreeRow>
            ))}
          </TreePane>
          <TreeScroll />
          <PaneDivider />
          <FileGrid>
            {['AnyDesk', 'Captures', 'MEmu Video'].map((name) => (
              <FileCell key={name}>
                <BigFolder />
                {name}
              </FileCell>
            ))}
          </FileGrid>
        </DialogBody>
        <DialogFooter>
          <FooterRow $gap={16} $right={-1}>
            File name:
            <ComboBox $width={443} $left={-10} $bg="#383838">
              <span />
              <ChevronDown size={15} strokeWidth={1.2} />
            </ComboBox>
            <ComboBox $width={235} $bg="#333333">
              All Files
              <ChevronDown size={15} strokeWidth={1.2} />
            </ComboBox>
          </FooterRow>
          <FooterRow $gap={17} $top={9}>
            <DialogButton $primary>Open</DialogButton>
            <DialogButton>Cancel</DialogButton>
          </FooterRow>
          <ResizeGrip width="12" height="12" viewBox="0 0 12 12" fill="#b5b5b5">
            <path d="M8 0h3v3H8zM4 4h3v3H4zM8 4h3v3H8zM0 8h3v3H0zM4 8h3v3H4zM8 8h3v3H8z" />
          </ResizeGrip>
        </DialogFooter>
      </Dialog>
    </Screen>
  );
}
